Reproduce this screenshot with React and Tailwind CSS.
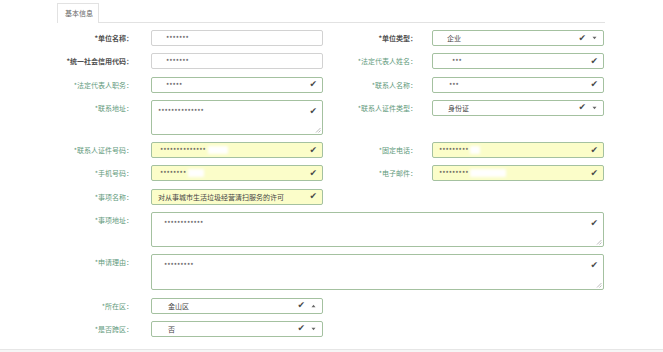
import React from 'react'

const font = { fontFamily: '"Noto Sans CJK SC", "Liberation Sans", sans-serif' }

// label cell, right aligned
function Label({ children, dark, right }) {
  return (
    <div
      className={`text-right text-[7px] leading-[16px] whitespace-nowrap ${right ? 'pr-[15px]' : 'pr-[18px]'} ${
        dark ? 'text-[#505050] font-semibold' : 'text-[#5f9a7c]'
      }`}
    >
      {children}
    </div>
  )
}

function Check() {
  return (
    <span className="text-[#4a4a4a] text-[9px] leading-none font-bold" style={{ fontFamily: '"DejaVu Sans", sans-serif' }}>
      ✔
    </span>
  )
}

function Caret({ up }) {
  return (
    <svg width="5" height="4" viewBox="0 0 5 4" className="ml-[6px]">
      {up ? <path d="M0.5 3.2 L2.5 0.8 L4.5 3.2 Z" fill="#666" /> : <path d="M0.5 0.8 L2.5 3.2 L4.5 0.8 Z" fill="#666" />}
    </svg>
  )
}

function Grip() {
  return (
    <svg width="6" height="6" viewBox="0 0 6 6" className="absolute right-[1px] bottom-[1px]">
      <path d="M5.5 1 L1 5.5 M5.5 3.5 L3.5 5.5" stroke="#aaa" strokeWidth="0.8" />
    </svg>
  )
}

function Field({ value, ok, fill, select, up, area, h, pl, blur }) {
  const border = ok ? 'border-[#a4c1a0]' : 'border-[#d2d2d2]'
  const bg = fill ? 'bg-[#fbfdc9]' : 'bg-white'
  return (
    <div
      className={`relative flex border rounded-[2px] ${border} ${bg} ${area ? 'items-start pt-[5px]' : 'items-center'}`}
      style={{ height: h || 16, paddingLeft: pl || 14 }}
    >
      <span className="text-[7px] leading-[10px] text-[#444] whitespace-nowrap">{value}</span>
      {blur && <span className="h-[8px] bg-white blur-[1.5px]" style={{ width: blur, marginLeft: 2 }} />}
      <div className={`ml-auto flex items-center ${select ? 'pr-[6px]' : 'pr-[5px]'} ${area ? 'pt-[1px]' : ''}`}>
        {ok && <Check />}
        {select && <Caret up={up} />}
      </div>
      {area && <Grip />}
    </div>
  )
}

export default function App() {
  return (
    <div className="w-[663px] h-[352px] bg-white overflow-hidden flex flex-col" style={font}>
      <div className="pt-[3px]">
        <div className="ml-[57px] w-[548px] h-[20px] border-b border-[#e2e2e2] flex">
          <div className="w-[42px] h-[20px] border border-b-0 border-[#e2e2e2] bg-white flex items-center pl-[7px] text-[7px] text-[#666]">
            基本信息
          </div>
        </div>
      </div>

      <div className="mt-[7px] grid grid-cols-[151px_172px_109px_172px] gap-y-[7.3px] items-start">
        <Label dark>*单位名称：</Label>
        <Field value="*******" />
        <Label dark right>*单位类型：</Label>
        <Field value="企业" ok select />

        <Label dark>*统一社会信用代码：</Label>
        <Field value="*******" />
        <Label right>*法定代表人姓名：</Label>
        <Field value="***" ok pl={19} />

        <Label>*法定代表人职务：</Label>
        <Field value="*****" ok />
        <Label right>*联系人名称：</Label>
        <Field value="***" ok pl={16} />

        <Label>*联系地址：</Label>
        <Field value="**************" ok area h={35} pl={6} />
        <Label right>*联系人证件类型：</Label>
        <Field value="身份证" ok select pl={15} />

        <Label>*联系人证件号码：</Label>
        <Field value="**************" ok fill pl={8} blur={20} />
        <Label right>*固定电话：</Label>
        <Field value="*********" ok fill pl={6} blur={10} />

        <Label>*手机号码：</Label>
        <Field value="********" ok fill pl={8} blur={16} />
        <Label right>*电子邮件：</Label>
        <Field value="*********" ok fill pl={6} blur={36} />

        <Label>*事项名称：</Label>
        <Field value="对从事城市生活垃圾经营清扫服务的许可" ok fill pl={6} />
        <div className="col-span-2" />

        <Label>*事项地址：</Label>
        <div className="col-span-3 w-[453px]">
          <Field value="************" ok area h={35} pl={12} />
        </div>

        <Label>*申请理由：</Label>
        <div className="col-span-3 w-[453px]">
          <Field value="*********" ok area h={36} pl={12} />
        </div>

        <Label>*所在区：</Label>
        <Field value="金山区" ok select up pl={16} />
        <div className="col-span-2" />

        <Label>*是否跨区：</Label>
        <Field value="否" ok select pl={16} />
        <div className="col-span-2" />
      </div>

      <div className="mt-auto h-[3px] border-t border-[#e6e6e6] bg-[#f6f6f6]" />
    </div>
  )
}
